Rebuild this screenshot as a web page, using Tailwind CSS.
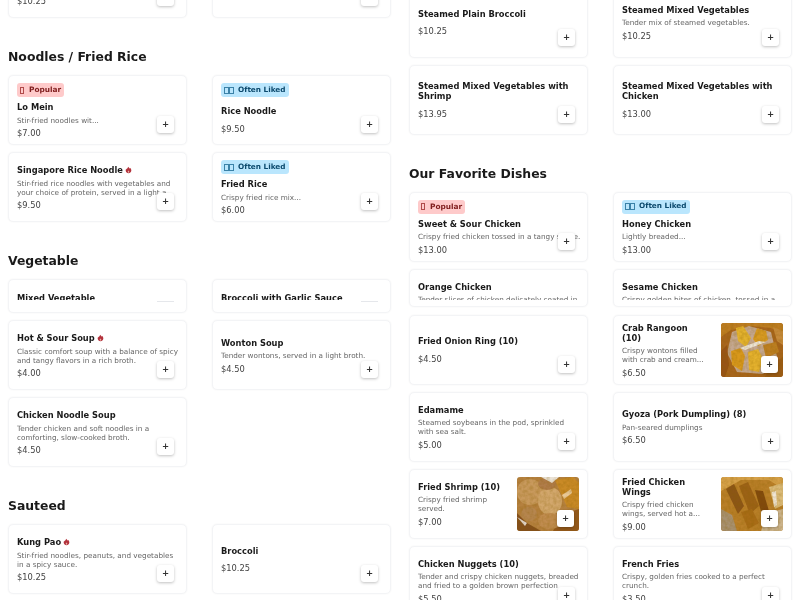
<!DOCTYPE html>
<html lang="en">
<head>
<meta charset="UTF-8">
<meta name="viewport" content="width=device-width, initial-scale=1.0">
<title>Menu</title>
<script src="https://cdn.jsdelivr.net/npm/@tailwindcss/browser@4"></script>
</head>
<body class="bg-white text-[#1a1a1a] font-['DejaVu_Sans',sans-serif] h-screen overflow-hidden">
<svg class="absolute w-0 h-0">
  <defs>
    <symbol id="flame" viewBox="0 0 10 10"><path fill="#b3323c" d="M5 .3c.5 1.600 1.300 1.900 1.700 3 .3-.4.3-.9.2-1.400 1.400 1 2.400 2.600 2.100 4.300C8.700 8.500 7 9.800 5 9.800S1.300 8.500 1 6.200C.8 4.900 1.500 3.800 2.300 3c0 .6.100 1 .5 1.300C2.900 2.800 3.800 1.500 5 .3z"/><path fill="#e8b0a8" d="M5 5.600c.8.800 1.300 1.500 1.100 2.300-.2.700-.6 1-1.100 1s-1-.3-1.100-1c-.2-.8.300-1.500 1.100-2.300z"/></symbol>
    <filter id="b1"><feGaussianBlur stdDeviation="0.7"/></filter>
    <filter id="grain"><feTurbulence type="fractalNoise" baseFrequency="0.3" numOctaves="2" seed="4"/><feColorMatrix values="0 0 0 0 0.25  0 0 0 0 0.12  0 0 0 0 0  1.800 0 0 0 -0.6"/></filter>
  </defs>
</svg>
<div class="flex gap-[18px] px-[8px] h-[600px] overflow-hidden items-start blur-[0.3px]">

  <!-- left column -->
  <div class="w-[383px] flex flex-col mt-[-52px]">
    <div class="grid grid-cols-2 gap-x-[25px] gap-y-[7px]">
      <div class="relative h-[69.500px] rounded-[5px] border border-gray-100 bg-white shadow-[0_0_2px_rgba(0,0,0,0.05)] px-[8px]">
        <div class="mt-[46px] text-[8.300px] leading-[12px] text-[#444]">$10.25</div>
        <button class="absolute right-[12px] bottom-[11px] w-[17px] h-[17px] rounded-[3px] bg-white shadow-[0_1px_3px_rgba(0,0,0,0.25)] text-[8.500px] leading-[17px] font-bold text-center text-[#333]">+</button>
      </div>
      <div class="relative h-[69.500px] rounded-[5px] border border-gray-100 bg-white shadow-[0_0_2px_rgba(0,0,0,0.05)] px-[8px]">
        <button class="absolute right-[12px] bottom-[11px] w-[17px] h-[17px] rounded-[3px] bg-white shadow-[0_1px_3px_rgba(0,0,0,0.25)] text-[8.500px] leading-[17px] font-bold text-center text-[#333]">+</button>
      </div>
    </div>

    <h2 class="mt-[32.500px] mb-[11px] text-[12.400px] leading-[14px] font-bold">Noodles / Fried Rice</h2>
    <div class="grid grid-cols-2 gap-x-[25px] gap-y-[7px]">
      <div class="relative h-[70px] rounded-[5px] border border-gray-100 bg-white shadow-[0_0_2px_rgba(0,0,0,0.05)] px-[8px] pt-[7px]">
        <span class="flex w-fit items-center gap-[5px] h-[14px] px-[3px] rounded-[3px] bg-[#fecaca] text-[#7f1d1d] text-[7.400px] font-bold"><i class="w-[4px] h-[7px] border-[0.7px] border-[#b04a4a]"></i>Popular</span>
        <h3 class="mt-[5px] text-[8.300px] leading-[10px] font-bold">Lo Mein</h3>
        <p class="mt-[3.500px] text-[7.250px] leading-[9px] text-[#666]">Stir-fried noodles wit...</p>
        <div class="mt-[2.500px] text-[8.300px] leading-[12px] text-[#444]">$7.00</div>
        <button class="absolute right-[12px] bottom-[11px] w-[17px] h-[17px] rounded-[3px] bg-white shadow-[0_1px_3px_rgba(0,0,0,0.25)] text-[8.500px] leading-[17px] font-bold text-center text-[#333]">+</button>
      </div>
      <div class="relative h-[70px] rounded-[5px] border border-gray-100 bg-white shadow-[0_0_2px_rgba(0,0,0,0.05)] px-[8px] pt-[7px]">
        <span class="flex w-fit items-center gap-[4px] h-[14px] px-[3px] rounded-[3px] bg-[#bae6fd] text-[#0c4a6e] text-[7.300px] font-bold"><span class="flex"><i class="w-[5px] h-[7px] border-[0.7px] border-[#3b82a8]"></i><i class="w-[5px] h-[7px] border-[0.7px] border-[#3b82a8]"></i></span>Often Liked</span>
        <h3 class="mt-[9px] text-[8.300px] leading-[10px] font-bold">Rice Noodle</h3>
        <div class="mt-[6.500px] text-[8.300px] leading-[12px] text-[#444]">$9.50</div>
        <button class="absolute right-[12px] bottom-[11px] w-[17px] h-[17px] rounded-[3px] bg-white shadow-[0_1px_3px_rgba(0,0,0,0.25)] text-[8.500px] leading-[17px] font-bold text-center text-[#333]">+</button>
      </div>
      <div class="relative h-[70px] rounded-[5px] border border-gray-100 bg-white shadow-[0_0_2px_rgba(0,0,0,0.05)] px-[8px] pt-[1px] flex flex-col justify-center">
        <h3 class="text-[8.300px] leading-[10px] font-bold flex items-center gap-[2px]">Singapore Rice Noodle <svg class="w-[7px] h-[8px]"><use href="#flame"/></svg></h3>
        <p class="mt-[4.500px] text-[7.250px] leading-[9px] text-[#666]">Stir-fried rice noodles with vegetables and your choice of protein, served in a light a...</p>
        <div class="mt-[1.500px] text-[8.300px] leading-[12px] text-[#444]">$9.50</div>
        <button class="absolute right-[12px] bottom-[11px] w-[17px] h-[17px] rounded-[3px] bg-white shadow-[0_1px_3px_rgba(0,0,0,0.25)] text-[8.500px] leading-[17px] font-bold text-center text-[#333]">+</button>
      </div>
      <div class="relative h-[70px] rounded-[5px] border border-gray-100 bg-white shadow-[0_0_2px_rgba(0,0,0,0.05)] px-[8px] pt-[7px]">
        <span class="flex w-fit items-center gap-[4px] h-[14px] px-[3px] rounded-[3px] bg-[#bae6fd] text-[#0c4a6e] text-[7.300px] font-bold"><span class="flex"><i class="w-[5px] h-[7px] border-[0.7px] border-[#3b82a8]"></i><i class="w-[5px] h-[7px] border-[0.7px] border-[#3b82a8]"></i></span>Often Liked</span>
        <h3 class="mt-[5px] text-[8.300px] leading-[10px] font-bold">Fried Rice</h3>
        <p class="mt-[3.500px] text-[7.250px] leading-[9px] text-[#666]">Crispy fried rice mix...</p>
        <div class="mt-[2.500px] text-[8.300px] leading-[12px] text-[#444]">$6.00</div>
        <button class="absolute right-[12px] bottom-[11px] w-[17px] h-[17px] rounded-[3px] bg-white shadow-[0_1px_3px_rgba(0,0,0,0.25)] text-[8.500px] leading-[17px] font-bold text-center text-[#333]">+</button>
      </div>
    </div>

    <h2 class="mt-[32px] mb-[11px] text-[12.400px] leading-[14px] font-bold">Vegetable</h2>
    <div class="grid grid-cols-2 gap-x-[25px] gap-y-[7px]">
      <div class="relative h-[34px] rounded-[5px] border border-gray-100 bg-white shadow-[0_0_2px_rgba(0,0,0,0.05)] px-[8px]">
        <div class="h-[20px] overflow-hidden pt-[13px]"><h3 class="text-[8.300px] leading-[10px] font-bold">Mixed Vegetable</h3></div>
        <div class="absolute right-[12px] top-[21px] w-[17px] h-px bg-gray-200"></div>
      </div>
      <div class="relative h-[34px] rounded-[5px] border border-gray-100 bg-white shadow-[0_0_2px_rgba(0,0,0,0.05)] px-[8px]">
        <div class="h-[20px] overflow-hidden pt-[13px]"><h3 class="text-[8.300px] leading-[10px] font-bold">Broccoli with Garlic Sauce</h3></div>
        <div class="absolute right-[12px] top-[21px] w-[17px] h-px bg-gray-200"></div>
      </div>
      <div class="relative h-[70px] rounded-[5px] border border-gray-100 bg-white shadow-[0_0_2px_rgba(0,0,0,0.05)] px-[8px] pt-[1px] flex flex-col justify-center">
        <h3 class="text-[8.300px] leading-[10px] font-bold flex items-center gap-[2px]">Hot &amp; Sour Soup <svg class="w-[7px] h-[8px]"><use href="#flame"/></svg></h3>
        <p class="mt-[4.500px] text-[7.250px] leading-[9px] text-[#666]">Classic comfort soup with a balance of spicy and tangy flavors in a rich broth.</p>
        <div class="mt-[1.500px] text-[8.300px] leading-[12px] text-[#444]">$4.00</div>
        <button class="absolute right-[12px] bottom-[11px] w-[17px] h-[17px] rounded-[3px] bg-white shadow-[0_1px_3px_rgba(0,0,0,0.25)] text-[8.500px] leading-[17px] font-bold text-center text-[#333]">+</button>
      </div>
      <div class="relative h-[70px] rounded-[5px] border border-gray-100 bg-white shadow-[0_0_2px_rgba(0,0,0,0.05)] px-[8px] pt-[2px] flex flex-col justify-center">
        <h3 class="text-[8.300px] leading-[10px] font-bold">Wonton Soup</h3>
        <p class="mt-[3.500px] text-[7.250px] leading-[9px] text-[#666]">Tender wontons, served in a light broth.</p>
        <div class="mt-[2.500px] text-[8.300px] leading-[12px] text-[#444]">$4.50</div>
        <button class="absolute right-[12px] bottom-[11px] w-[17px] h-[17px] rounded-[3px] bg-white shadow-[0_1px_3px_rgba(0,0,0,0.25)] text-[8.500px] leading-[17px] font-bold text-center text-[#333]">+</button>
      </div>
      <div class="relative h-[70px] rounded-[5px] border border-gray-100 bg-white shadow-[0_0_2px_rgba(0,0,0,0.05)] px-[8px] pt-[2px] flex flex-col justify-center">
        <h3 class="text-[8.300px] leading-[10px] font-bold">Chicken Noodle Soup</h3>
        <p class="mt-[3.500px] text-[7.250px] leading-[9px] text-[#666]">Tender chicken and soft noodles in a comforting, slow-cooked broth.</p>
        <div class="mt-[2.500px] text-[8.300px] leading-[12px] text-[#444]">$4.50</div>
        <button class="absolute right-[12px] bottom-[11px] w-[17px] h-[17px] rounded-[3px] bg-white shadow-[0_1px_3px_rgba(0,0,0,0.25)] text-[8.500px] leading-[17px] font-bold text-center text-[#333]">+</button>
      </div>
    </div>

    <h2 class="mt-[32px] mb-[11px] text-[12.400px] leading-[14px] font-bold">Sauteed</h2>
    <div class="grid grid-cols-2 gap-x-[25px] gap-y-[7px]">
      <div class="relative h-[70px] rounded-[5px] border border-gray-100 bg-white shadow-[0_0_2px_rgba(0,0,0,0.05)] px-[8px] pt-[1px] flex flex-col justify-center">
        <h3 class="text-[8.300px] leading-[10px] font-bold flex items-center gap-[2px]">Kung Pao <svg class="w-[7px] h-[8px]"><use href="#flame"/></svg></h3>
        <p class="mt-[4.500px] text-[7.250px] leading-[9px] text-[#666]">Stir-fried noodles, peanuts, and vegetables in a spicy sauce.</p>
        <div class="mt-[1.500px] text-[8.300px] leading-[12px] text-[#444]">$10.25</div>
        <button class="absolute right-[12px] bottom-[11px] w-[17px] h-[17px] rounded-[3px] bg-white shadow-[0_1px_3px_rgba(0,0,0,0.25)] text-[8.500px] leading-[17px] font-bold text-center text-[#333]">+</button>
      </div>
      <div class="relative h-[70px] rounded-[5px] border border-gray-100 bg-white shadow-[0_0_2px_rgba(0,0,0,0.05)] px-[8px] pt-[2px] flex flex-col justify-center">
        <h3 class="text-[8.300px] leading-[10px] font-bold">Broccoli</h3>
        <div class="mt-[6.500px] text-[8.300px] leading-[12px] text-[#444]">$10.25</div>
        <button class="absolute right-[12px] bottom-[11px] w-[17px] h-[17px] rounded-[3px] bg-white shadow-[0_1px_3px_rgba(0,0,0,0.25)] text-[8.500px] leading-[17px] font-bold text-center text-[#333]">+</button>
      </div>
    </div>
  </div>

  <!-- right column -->
  <div class="w-[383px] flex flex-col mt-[-13.500px]">
    <div class="grid grid-cols-2 gap-x-[25px] gap-y-[7px]">
      <div class="relative h-[71px] rounded-[5px] border border-gray-100 bg-white shadow-[0_0_2px_rgba(0,0,0,0.05)] px-[8px] pt-[2px] flex flex-col justify-center">
        <h3 class="text-[8.300px] leading-[10px] font-bold">Steamed Plain Broccoli</h3>
        <div class="mt-[6.500px] text-[8.300px] leading-[12px] text-[#444]">$10.25</div>
        <button class="absolute right-[12px] bottom-[11px] w-[17px] h-[17px] rounded-[3px] bg-white shadow-[0_1px_3px_rgba(0,0,0,0.25)] text-[8.500px] leading-[17px] font-bold text-center text-[#333]">+</button>
      </div>
      <div class="relative h-[71px] rounded-[5px] border border-gray-100 bg-white shadow-[0_0_2px_rgba(0,0,0,0.05)] px-[8px] pt-[2px] flex flex-col justify-center">
        <h3 class="text-[8.300px] leading-[10px] font-bold">Steamed Mixed Vegetables</h3>
        <p class="mt-[3.500px] text-[7.250px] leading-[9px] text-[#666]">Tender mix of steamed vegetables.</p>
        <div class="mt-[2.500px] text-[8.300px] leading-[12px] text-[#444]">$10.25</div>
        <button class="absolute right-[12px] bottom-[11px] w-[17px] h-[17px] rounded-[3px] bg-white shadow-[0_1px_3px_rgba(0,0,0,0.25)] text-[8.500px] leading-[17px] font-bold text-center text-[#333]">+</button>
      </div>
      <div class="relative h-[70px] rounded-[5px] border border-gray-100 bg-white shadow-[0_0_2px_rgba(0,0,0,0.05)] px-[8px] pt-[2px] flex flex-col justify-center">
        <h3 class="text-[8.300px] leading-[10px] font-bold">Steamed Mixed Vegetables with Shrimp</h3>
        <div class="mt-[6.500px] text-[8.300px] leading-[12px] text-[#444]">$13.95</div>
        <button class="absolute right-[12px] bottom-[11px] w-[17px] h-[17px] rounded-[3px] bg-white shadow-[0_1px_3px_rgba(0,0,0,0.25)] text-[8.500px] leading-[17px] font-bold text-center text-[#333]">+</button>
      </div>
      <div class="relative h-[70px] rounded-[5px] border border-gray-100 bg-white shadow-[0_0_2px_rgba(0,0,0,0.05)] px-[8px] pt-[2px] flex flex-col justify-center">
        <h3 class="text-[8.300px] leading-[10px] font-bold">Steamed Mixed Vegetables with Chicken</h3>
        <div class="mt-[6.500px] text-[8.300px] leading-[12px] text-[#444]">$13.00</div>
        <button class="absolute right-[12px] bottom-[11px] w-[17px] h-[17px] rounded-[3px] bg-white shadow-[0_1px_3px_rgba(0,0,0,0.25)] text-[8.500px] leading-[17px] font-bold text-center text-[#333]">+</button>
      </div>
    </div>

    <h2 class="mt-[32px] mb-[11px] text-[12.400px] leading-[14px] font-bold">Our Favorite Dishes</h2>
    <div class="grid grid-cols-2 gap-x-[25px] gap-y-[7px]">
      <div class="relative h-[70px] rounded-[5px] border border-gray-100 bg-white shadow-[0_0_2px_rgba(0,0,0,0.05)] px-[8px] pt-[7px]">
        <span class="flex w-fit items-center gap-[5px] h-[14px] px-[3px] rounded-[3px] bg-[#fecaca] text-[#7f1d1d] text-[7.400px] font-bold"><i class="w-[4px] h-[7px] border-[0.7px] border-[#b04a4a]"></i>Popular</span>
        <h3 class="mt-[5px] text-[8.300px] leading-[10px] font-bold">Sweet &amp; Sour Chicken</h3>
        <p class="mt-[3.500px] text-[7.250px] leading-[9px] text-[#666] whitespace-nowrap">Crispy fried chicken tossed in a tangy sauce.</p>
        <div class="mt-[2.500px] text-[8.300px] leading-[12px] text-[#444]">$13.00</div>
        <button class="absolute right-[12px] bottom-[11px] w-[17px] h-[17px] rounded-[3px] bg-white shadow-[0_1px_3px_rgba(0,0,0,0.25)] text-[8.500px] leading-[17px] font-bold text-center text-[#333]">+</button>
      </div>
      <div class="relative h-[70px] rounded-[5px] border border-gray-100 bg-white shadow-[0_0_2px_rgba(0,0,0,0.05)] px-[8px] pt-[7px]">
        <span class="flex w-fit items-center gap-[4px] h-[14px] px-[3px] rounded-[3px] bg-[#bae6fd] text-[#0c4a6e] text-[7.300px] font-bold"><span class="flex"><i class="w-[5px] h-[7px] border-[0.7px] border-[#3b82a8]"></i><i class="w-[5px] h-[7px] border-[0.7px] border-[#3b82a8]"></i></span>Often Liked</span>
        <h3 class="mt-[5px] text-[8.300px] leading-[10px] font-bold">Honey Chicken</h3>
        <p class="mt-[3.500px] text-[7.250px] leading-[9px] text-[#666]">Lightly breaded...</p>
        <div class="mt-[2.500px] text-[8.300px] leading-[12px] text-[#444]">$13.00</div>
        <button class="absolute right-[12px] bottom-[11px] w-[17px] h-[17px] rounded-[3px] bg-white shadow-[0_1px_3px_rgba(0,0,0,0.25)] text-[8.500px] leading-[17px] font-bold text-center text-[#333]">+</button>
      </div>
      <div class="relative h-[38px] rounded-[5px] border border-gray-100 bg-white shadow-[0_0_2px_rgba(0,0,0,0.05)] px-[8px]">
        <div class="h-[30px] overflow-hidden pt-[12px]">
          <h3 class="text-[8.300px] leading-[10px] font-bold">Orange Chicken</h3>
          <p class="mt-[3.500px] text-[7.250px] leading-[9px] text-[#666] whitespace-nowrap">Tender slices of chicken delicately coated in</p>
        </div>
      </div>
      <div class="relative h-[38px] rounded-[5px] border border-gray-100 bg-white shadow-[0_0_2px_rgba(0,0,0,0.05)] px-[8px]">
        <div class="h-[30px] overflow-hidden pt-[12px]">
          <h3 class="text-[8.300px] leading-[10px] font-bold">Sesame Chicken</h3>
          <p class="mt-[3.500px] text-[7.250px] leading-[9px] text-[#666] whitespace-nowrap">Crispy golden bites of chicken, tossed in a</p>
        </div>
      </div>
    </div>
    <div class="grid grid-cols-2 gap-x-[25px] gap-y-[7px] mt-[8px]">
      <div class="relative h-[70px] rounded-[5px] border border-gray-100 bg-white shadow-[0_0_2px_rgba(0,0,0,0.05)] px-[8px] pt-[2px] flex flex-col justify-center">
        <h3 class="text-[8.300px] leading-[10px] font-bold">Fried Onion Ring (10)</h3>
        <div class="mt-[6.500px] text-[8.300px] leading-[12px] text-[#444]">$4.50</div>
        <button class="absolute right-[12px] bottom-[11px] w-[17px] h-[17px] rounded-[3px] bg-white shadow-[0_1px_3px_rgba(0,0,0,0.25)] text-[8.500px] leading-[17px] font-bold text-center text-[#333]">+</button>
      </div>
      <div class="relative h-[70px] rounded-[5px] border border-gray-100 bg-white shadow-[0_0_2px_rgba(0,0,0,0.05)] px-[8px] flex items-center">
        <div class="w-[84px] pt-[2px]">
          <h3 class="text-[8.300px] leading-[10px] font-bold">Crab Rangoon<br>(10)</h3>
          <p class="mt-[3.500px] text-[7.250px] leading-[9px] text-[#666]">Crispy wontons filled with crab and cream...</p>
          <div class="mt-[2.500px] text-[8.300px] leading-[12px] text-[#444]">$6.50</div>
        </div>
        <svg class="ml-auto w-[62px] h-[54px] rounded-[3px]" viewBox="0 0 62 54">
          <rect width="62" height="54" fill="#a8651c"/>
          <g filter="url(#b1)">
            <path d="M0 0h62v10L50 5 30 3 10 7 0 14z" fill="#bd7d22"/>
            <path d="M11 9 28 3 50 9 57 38 42 51 16 49 6 30z" fill="#c4a78f"/>
            <path d="M15 5l7-2 8 12-5 9-8-6z" fill="#e3b22e"/>
            <path d="M36 5l9 3 2 9-10 6-5-7z" fill="#d79a22"/>
            <path d="M10 28l10-3 4 8-3 15-10-6z" fill="#d8981f"/>
            <path d="M27 29l10-3 5 10-4 13-10-2z" fill="#e5b22e"/>
            <path d="M42 22l13-3 3 10-13 6z" fill="#bd7f20"/>
            <path d="M19 25l19-7 7 1-21 8z" fill="#f0e8dc"/>
            <path d="M0 28l6-6 2 20-4 12H0z" fill="#985214"/>
            <path d="M50 42l12-8v20H44z" fill="#9c5c14"/>
            <path d="M52 4l10 4v14l-6-4z" fill="#c68a3a"/>
          </g>
          <rect width="62" height="54" filter="url(#grain)" opacity="0.3"/>
        </svg>
        <button class="absolute right-[13px] bottom-[11px] w-[17px] h-[17px] rounded-[3px] bg-white shadow-[0_1px_3px_rgba(0,0,0,0.25)] text-[8.500px] leading-[17px] font-bold text-center text-[#333]">+</button>
      </div>
      <div class="relative h-[70px] rounded-[5px] border border-gray-100 bg-white shadow-[0_0_2px_rgba(0,0,0,0.05)] px-[8px] pt-[2px] flex flex-col justify-center">
        <h3 class="text-[8.300px] leading-[10px] font-bold">Edamame</h3>
        <p class="mt-[3.500px] text-[7.250px] leading-[9px] text-[#666]">Steamed soybeans in the pod, sprinkled with sea salt.</p>
        <div class="mt-[2.500px] text-[8.300px] leading-[12px] text-[#444]">$5.00</div>
        <button class="absolute right-[12px] bottom-[11px] w-[17px] h-[17px] rounded-[3px] bg-white shadow-[0_1px_3px_rgba(0,0,0,0.25)] text-[8.500px] leading-[17px] font-bold text-center text-[#333]">+</button>
      </div>
      <div class="relative h-[70px] rounded-[5px] border border-gray-100 bg-white shadow-[0_0_2px_rgba(0,0,0,0.05)] px-[8px] pt-[2px] flex flex-col justify-center">
        <h3 class="text-[8.300px] leading-[10px] font-bold">Gyoza (Pork Dumpling) (8)</h3>
        <p class="mt-[3.500px] text-[7.250px] leading-[9px] text-[#666]">Pan-seared dumplings</p>
        <div class="mt-[2.500px] text-[8.300px] leading-[12px] text-[#444]">$6.50</div>
        <button class="absolute right-[12px] bottom-[11px] w-[17px] h-[17px] rounded-[3px] bg-white shadow-[0_1px_3px_rgba(0,0,0,0.25)] text-[8.500px] leading-[17px] font-bold text-center text-[#333]">+</button>
      </div>
      <div class="relative h-[70px] rounded-[5px] border border-gray-100 bg-white shadow-[0_0_2px_rgba(0,0,0,0.05)] px-[8px] flex items-center">
        <div class="w-[84px] pt-[2px]">
          <h3 class="text-[8.300px] leading-[10px] font-bold">Fried Shrimp (10)</h3>
          <p class="mt-[3.500px] text-[7.250px] leading-[9px] text-[#666]">Crispy fried shrimp served.</p>
          <div class="mt-[2.500px] text-[8.300px] leading-[12px] text-[#444]">$7.00</div>
        </div>
        <svg class="ml-auto w-[62px] h-[54px] rounded-[3px]" viewBox="0 0 62 54">
          <rect width="62" height="54" fill="#b5813f"/>
          <g filter="url(#b1)">
            <path d="M38 3l18-3 6 6v26L50 30z" fill="#c98a28"/>
            <path d="M0 36l10 10 14 8H0z" fill="#84501f"/>
            <path d="M44 38l18-6v22H36z" fill="#94581c"/>
            <ellipse cx="13" cy="15" rx="13" ry="13" fill="#c8995c"/>
            <ellipse cx="33" cy="24" rx="12" ry="14" fill="#d2a76c"/>
            <ellipse cx="30" cy="7" rx="9" ry="6" fill="#b07c48"/>
            <ellipse cx="12" cy="37" rx="8" ry="7" fill="#b6864f"/>
            <ellipse cx="33" cy="44" rx="12" ry="8" fill="#c08c50"/>
            <path d="M24 0h18l-7 6z" fill="#eae2d6"/>
            <path d="M0 40l10 6-2 3z" fill="#e0d4c8"/>
            <path d="M45 18l9-6 1 4-8 6z" fill="#e8c896"/>
          </g>
          <rect width="62" height="54" filter="url(#grain)" opacity="0.3"/>
        </svg>
        <button class="absolute right-[13px] bottom-[11px] w-[17px] h-[17px] rounded-[3px] bg-white shadow-[0_1px_3px_rgba(0,0,0,0.25)] text-[8.500px] leading-[17px] font-bold text-center text-[#333]">+</button>
      </div>
      <div class="relative h-[70px] rounded-[5px] border border-gray-100 bg-white shadow-[0_0_2px_rgba(0,0,0,0.05)] px-[8px] flex items-center">
        <div class="w-[84px] pt-[2px]">
          <h3 class="text-[8.300px] leading-[10px] font-bold">Fried Chicken<br>Wings</h3>
          <p class="mt-[3.500px] text-[7.250px] leading-[9px] text-[#666]">Crispy fried chicken wings, served hot a...</p>
          <div class="mt-[2.500px] text-[8.300px] leading-[12px] text-[#444]">$9.00</div>
        </div>
        <svg class="ml-auto w-[62px] h-[54px] rounded-[3px]" viewBox="0 0 62 54">
          <rect width="62" height="54" fill="#b97f28"/>
          <g filter="url(#b1)">
            <path d="M0 0h62v12L48 3 20 3 0 14z" fill="#d6a148"/>
            <path d="M5 12l8-5 10 22-6 8z" fill="#8c5616"/>
            <path d="M18 9l9-4 11 24-9 8z" fill="#9c6216"/>
            <path d="M34 13l8 1 6 20-7 4z" fill="#80490f"/>
            <path d="M20 35l11-3 7 14-11 6z" fill="#a86c18"/>
            <path d="M0 32l11 6 5 16H0z" fill="#a8916f"/>
            <path d="M48 10l14-4v22l-8 4z" fill="#dcbc7a"/>
            <path d="M46 36l16-4v22H40z" fill="#cdb58d"/>
            <path d="M51 15l4-1 1 14-3 2z" fill="#f0e6d6"/>
          </g>
          <rect width="62" height="54" filter="url(#grain)" opacity="0.3"/>
        </svg>
        <button class="absolute right-[13px] bottom-[11px] w-[17px] h-[17px] rounded-[3px] bg-white shadow-[0_1px_3px_rgba(0,0,0,0.25)] text-[8.500px] leading-[17px] font-bold text-center text-[#333]">+</button>
      </div>
      <div class="relative h-[70px] rounded-[5px] border border-gray-100 bg-white shadow-[0_0_2px_rgba(0,0,0,0.05)] px-[8px] pt-[2px] flex flex-col justify-center">
        <h3 class="text-[8.300px] leading-[10px] font-bold">Chicken Nuggets (10)</h3>
        <p class="mt-[3.500px] text-[7.250px] leading-[9px] text-[#666]">Tender and crispy chicken nuggets, breaded and fried to a golden brown perfection</p>
        <div class="mt-[2.500px] text-[8.300px] leading-[12px] text-[#444]">$5.50</div>
        <button class="absolute right-[12px] bottom-[11px] w-[17px] h-[17px] rounded-[3px] bg-white shadow-[0_1px_3px_rgba(0,0,0,0.25)] text-[8.500px] leading-[17px] font-bold text-center text-[#333]">+</button>
      </div>
      <div class="relative h-[70px] rounded-[5px] border border-gray-100 bg-white shadow-[0_0_2px_rgba(0,0,0,0.05)] px-[8px] pt-[2px] flex flex-col justify-center">
        <h3 class="text-[8.300px] leading-[10px] font-bold">French Fries</h3>
        <p class="mt-[3.500px] text-[7.250px] leading-[9px] text-[#666]">Crispy, golden fries cooked to a perfect crunch.</p>
        <div class="mt-[2.500px] text-[8.300px] leading-[12px] text-[#444]">$3.50</div>
        <button class="absolute right-[12px] bottom-[11px] w-[17px] h-[17px] rounded-[3px] bg-white shadow-[0_1px_3px_rgba(0,0,0,0.25)] text-[8.500px] leading-[17px] font-bold text-center text-[#333]">+</button>
      </div>
    </div>
  </div>
</div>
</body>
</html>
